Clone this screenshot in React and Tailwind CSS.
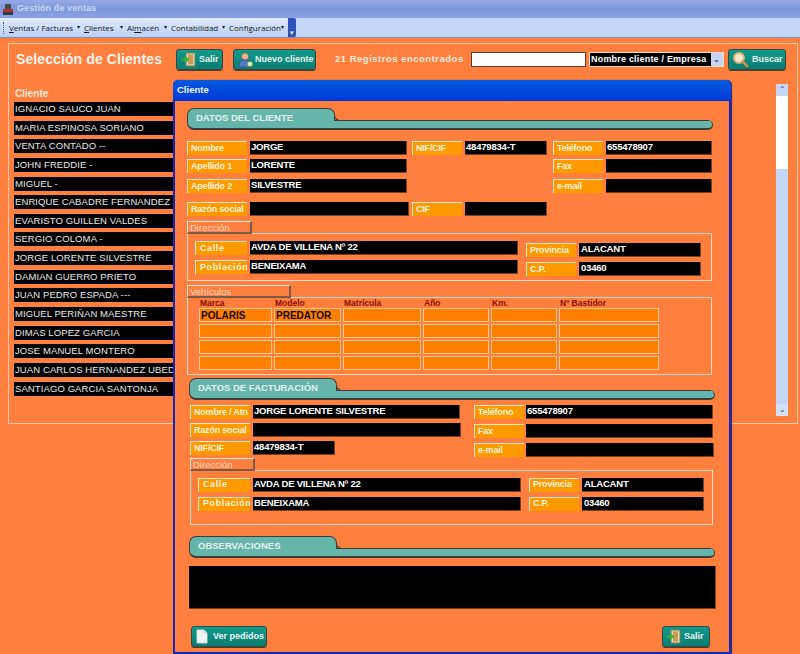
import React from 'react'

const clientes = [
  'IGNACIO SAUCO JUAN',
  'MARIA ESPINOSA SORIANO',
  'VENTA CONTADO --',
  'JOHN FREDDIE -',
  'MIGUEL  -',
  'ENRIQUE CABADRE FERNANDEZ',
  'EVARISTO GUILLEN VALDES',
  'SERGIO COLOMA -',
  'JORGE LORENTE SILVESTRE',
  'DAMIAN GUERRO PRIETO',
  'JUAN PEDRO ESPADA ---',
  'MIGUEL PERIÑAN MAESTRE',
  'DIMAS LOPEZ GARCIA',
  'JOSE MANUEL MONTERO',
  'JUAN CARLOS HERNANDEZ UBED',
  'SANTIAGO GARCIA SANTONJA',
]

const menus = [
  { w: 'w-[75px]', label: <><u>V</u>entas / Facturas</> },
  { w: 'w-[43px]', label: <><u>C</u>lientes</> },
  { w: 'w-[44px]', label: <>Al<u>m</u>acén</> },
  { w: 'w-[58px]', label: <>Contabilidad</> },
  { w: 'w-[57px]', label: <>Configuración</> },
]

const DoorIcon = () => (
  <svg width="15" height="15" viewBox="0 0 15 15" className="shrink-0">
    <rect x="5" y="1" width="9" height="13" fill="#e8d8a8" stroke="#70806a" />
    <rect x="7" y="2.5" width="5" height="10" fill="#c99a50" />
    <path d="M1 7.5h5M4 5l3 2.5L4 10" fill="none" stroke="#3fae3f" strokeWidth="2" />
  </svg>
)

const UserIcon = () => (
  <svg width="17" height="16" viewBox="0 0 17 16" className="shrink-0">
    <circle cx="8" cy="4.5" r="3.5" fill="#f0b890" stroke="#80604a" strokeWidth="0.7" />
    <path d="M2 15c0-5 2.500-7 6-7s6 2 6 7z" fill="#4f79c8" stroke="#2f4f90" strokeWidth="0.7" />
    <circle cx="13" cy="12" r="2.800" fill="#d8e8c0" stroke="#5a8a4a" strokeWidth="0.8" />
  </svg>
)

const SearchIcon = () => (
  <svg width="17" height="17" viewBox="0 0 17 17" className="shrink-0">
    <circle cx="7" cy="7" r="5" fill="#f4ead0" stroke="#e0b070" strokeWidth="2" />
    <path d="M10.500 10.500L15 15" stroke="#c89050" strokeWidth="2.500" strokeLinecap="round" />
  </svg>
)

const PageIcon = () => (
  <svg width="14" height="15" viewBox="0 0 14 15" className="shrink-0">
    <path d="M2 1h7l3 3v10H2z" fill="#eef4f2" stroke="#c8dcd8" />
    <path d="M9 1v3h3" fill="#ffffff" stroke="#b8ccc8" />
  </svg>
)

function TealButton({ className, children }) {
  return (
    <div className={`flex h-[21px] shrink-0 items-center rounded-[3px] border border-[#2f4a48] bg-gradient-to-b from-[#119a8c] to-[#0c7d72] text-[9px] font-bold whitespace-nowrap text-[#e8f4f0] shadow-[0_1px_0_#5a3a20] ${className}`}>
      {children}
    </div>
  )
}

function Label({ className, spaced, children }) {
  return (
    <div className={`flex h-[14px] shrink-0 items-center overflow-hidden border-t border-l border-[#ffe8c8] border-r-[#7a5a40] border-b-[#7a5a40] bg-[#ff9900] text-[9px] font-bold whitespace-nowrap text-[#fff4dc] ${spaced ? 'pl-[4px] tracking-[0.6px]' : 'pl-[3px] tracking-[-0.2px]'} ${className}`}>
      {children}
    </div>
  )
}

function Field({ className, children }) {
  return (
    <div className={`flex h-[14px] shrink-0 items-center overflow-hidden border-r border-b border-[#7a4020] bg-black pl-[1px] text-[9.500px] font-bold tracking-[-0.2px] whitespace-nowrap text-white ${className}`}>
      {children}
    </div>
  )
}

function SectionTitle({ className, children }) {
  return (
    <div className={`flex h-[22px] items-end ${className}`}>
      <div className="relative flex h-[22px] w-[148px] items-center rounded-t-[7px] rounded-bl-[7px] border border-b-2 border-[#3d3d38] bg-[#66b5ab] pl-[8px] text-[9.500px] font-bold whitespace-nowrap text-[#e4f2ee]">
        {children}
      </div>
      <div className="relative z-10 -ml-[7px] h-[10px] flex-1 rounded-r-full border-r border-b-2 border-[#3d3d38] bg-[#66b5ab]">
        <div className="absolute top-0 right-[3px] left-[6px] h-[1px] bg-[#3d3d38]" />
        <div className="absolute -top-[5px] left-[6px] h-[6px] w-[6px] rounded-bl-[6px] border-b border-l border-[#3d3d38] bg-[#ff7f3f]" />
      </div>
    </div>
  )
}

function GroupTab({ className, children }) {
  return (
    <div className={`relative z-10 h-[13px] border-t border-l border-[#ffe8d8] border-r-2 border-b-2 border-r-[#7a5a48] border-b-[#7a5a48] pl-[2px] text-[9.500px] leading-[11px] whitespace-nowrap text-[#ffd8c0] ${className}`}>
      {children}
    </div>
  )
}

function Direccion({ calle, poblacion, boxClass, leftClass, rightClass }) {
  return (
    <div>
      <GroupTab className="w-[65px]">Dirección</GroupTab>
      <div className={`-mt-px flex border-[1.500px] border-[#f0dccb] ${boxClass}`}>
        <div className={`ml-[7px] flex flex-col gap-[5px] ${leftClass}`}>
          <div className="flex gap-[3px]">
            <Label className="w-[52px]" spaced>Calle</Label>
            <Field className="w-[268px]">{calle}</Field>
          </div>
          <div className="flex gap-[3px]">
            <Label className="w-[52px]" spaced>Población</Label>
            <Field className="w-[268px]">{poblacion}</Field>
          </div>
        </div>
        <div className={`ml-[8px] flex flex-col gap-[5px] ${rightClass}`}>
          <div className="flex gap-[3px]">
            <Label className="w-[50px]">Provincia</Label>
            <Field className="w-[122px] pl-[2px]">ALACANT</Field>
          </div>
          <div className="flex gap-[3px]">
            <Label className="w-[50px]">C.P.</Label>
            <Field className="w-[122px] pl-[2px]">03460</Field>
          </div>
        </div>
      </div>
    </div>
  )
}

const vehiculoCols = ['w-[73px]', 'w-[67px]', 'w-[78px]', 'w-[66px]', 'w-[66px]', 'w-[100px]']
const vehiculoHead = ['Marca', 'Modelo', 'Matrícula', 'Año', 'Km.', 'Nº Bastidor']

function Vehiculos() {
  const rows = [['POLARIS', 'PREDATOR', '', '', '', ''], ['', '', '', '', '', ''], ['', '', '', '', '', ''], ['', '', '', '', '', '']]
  return (
    <div className="mt-[4px]">
      <GroupTab className="w-[104px]">Vehículos</GroupTab>
      <div className="-mt-px h-[78px] w-[525px] border-[1.500px] border-[#f0dccb] pl-[11px]">
        <div className="flex h-[10px] gap-[2px] text-[8.500px] leading-[10px] font-bold text-[#8a1008]">
          {vehiculoHead.map((h, i) => (
            <div key={h} className={`pl-[1px] ${vehiculoCols[i]}`}>{h}</div>
          ))}
        </div>
        <div className="flex flex-col gap-[2px]">
          {rows.map((row, r) => (
            <div key={r} className="flex gap-[2px]">
              {row.map((v, i) => (
                <div key={i} className={`flex h-[14px] items-center border border-[#ffc890] bg-[#ff8000] pl-[1px] text-[10px] font-bold text-[#140800] ${vehiculoCols[i]}`}>
                  {v}
                </div>
              ))}
            </div>
          ))}
        </div>
      </div>
    </div>
  )
}

function ClienteModal() {
  return (
    <div className="absolute top-[80px] left-[173px] h-[574px] w-[558px] rounded-t-[5px] bg-[#1028b8] shadow-[1px_0_1px_#30207a]">
      <div className="flex h-[21px] items-center rounded-t-[5px] bg-gradient-to-b from-[#0a5ae0] to-[#0038d8] pl-[4px] text-[9.500px] font-bold text-[#f0f4ff]">
        Cliente
      </div>
      <div className="mx-[2px] h-[551px] bg-[#ff7f3f] pt-[7px]">
        <div className="ml-[12px] w-[526px]">
          <SectionTitle>DATOS DEL CLIENTE</SectionTitle>
          <div className="mt-[11px] flex">
            <Label className="w-[60px]">Nombre</Label>
            <Field className="ml-[3px] w-[157px]">JORGE</Field>
            <Label className="ml-[5px] w-[50px]">NIF/CIF</Label>
            <Field className="ml-[3px] w-[82px]">48479834-T</Field>
            <Label className="ml-[6px] w-[50px]">Teléfono</Label>
            <Field className="ml-[3px] w-[106px]">655478907</Field>
          </div>
          <div className="mt-[4px] flex">
            <Label className="w-[60px]">Apellido 1</Label>
            <Field className="ml-[3px] w-[157px]">LORENTE</Field>
            <Label className="ml-[146px] w-[50px]">Fax</Label>
            <Field className="ml-[3px] w-[106px]" />
          </div>
          <div className="mt-[6px] flex">
            <Label className="w-[60px]">Apellido 2</Label>
            <Field className="ml-[3px] w-[157px]">SILVESTRE</Field>
            <Label className="ml-[146px] w-[50px]">e-mail</Label>
            <Field className="ml-[3px] w-[106px]" />
          </div>
          <div className="mt-[9px] flex">
            <Label className="w-[60px]">Razón social</Label>
            <Field className="ml-[3px] w-[159px]" />
            <Label className="ml-[3px] w-[50px]">CIF</Label>
            <Field className="ml-[3px] w-[82px]" />
          </div>
          <div className="mt-[5px]">
            <Direccion
              calle="AVDA DE VILLENA Nº 22"
              poblacion="BENEIXAMA"
              boxClass="h-[48px] w-[525px]"
              leftClass="mt-[7px]"
              rightClass="mt-[9px]"
            />
          </div>
          <Vehiculos />
        </div>
        <div className="ml-[14px] w-[526px]">
          <SectionTitle className="mt-[3px]">DATOS DE FACTURACIÓN</SectionTitle>
          <div className="mt-[5px] flex">
            <div className="ml-[1px] flex flex-col gap-[4px]">
              <div className="flex gap-[3px]">
                <Label className="w-[60px]">Nombre / Atn</Label>
                <Field className="w-[207px]">JORGE LORENTE SILVESTRE</Field>
              </div>
              <div className="flex gap-[3px]">
                <Label className="w-[60px]">Razón social</Label>
                <Field className="w-[208px]" />
              </div>
              <div className="flex gap-[3px]">
                <Label className="w-[60px]">NIF/CIF</Label>
                <Field className="w-[82px]">48479834-T</Field>
              </div>
            </div>
            <div className="ml-[13px] flex flex-col gap-[5px]">
              <div className="flex gap-[2px]">
                <Label className="w-[50px]">Teléfono</Label>
                <Field className="w-[187px]">655478907</Field>
              </div>
              <div className="flex gap-[2px]">
                <Label className="w-[50px]">Fax</Label>
                <Field className="w-[187px]" />
              </div>
              <div className="flex gap-[2px]">
                <Label className="w-[50px]">e-mail</Label>
                <Field className="w-[188px]" />
              </div>
            </div>
          </div>
          <div className="mt-[1px] ml-[1px]">
            <Direccion
              calle="AVDA DE VILLENA Nº 22"
              poblacion="BENEIXAMA"
              boxClass="h-[55px] w-[523px]"
              leftClass="mt-[6.500px]"
              rightClass="mt-[6.500px]"
            />
          </div>
          <SectionTitle className="mt-[11px]">OBSERVACIONES</SectionTitle>
          <div className="mt-[8px] h-[43px] w-[527px] border-r border-b border-[#7a4020] bg-black" />
          <div className="mt-[17px] flex justify-between pr-[5px] pl-[2px]">
            <TealButton className="w-[76px] gap-[4px] pl-[3px]">
              <PageIcon />
              Ver pedidos
            </TealButton>
            <TealButton className="w-[48px] gap-[3px] pl-[3px]">
              <DoorIcon />
              Salir
            </TealButton>
          </div>
        </div>
      </div>
    </div>
  )
}

export default function App() {
  return (
    <div className="relative h-[654px] w-[800px] overflow-hidden bg-[#ff7f3f] font-['Liberation_Sans',Arial,sans-serif]">
      <div className="flex h-[18px] items-center gap-[3px] bg-gradient-to-b from-[#97a9e4] via-[#7e95dc] to-[#8ca2e2] pl-[2px] text-[9px] font-bold tracking-[0.1px] text-[#c8d8f4]">
        <svg width="12" height="13" viewBox="0 0 12 13">
          <rect x="3" y="1" width="6" height="5" fill="#405048" />
          <rect x="1" y="6" width="10" height="3" fill="#b03030" />
          <rect x="1" y="9" width="10" height="3" fill="#304038" />
        </svg>
        Gestión de ventas
      </div>

      <div className="flex h-[20px] border-b border-[#8090a8] bg-[#c3d6f7]">
        <div className="flex w-[288px] items-center rounded-r-[2px] bg-gradient-to-b from-[#e0ebfc] to-[#bcd0f5] pl-[3px] font-['Open_Sans',sans-serif] text-[8px] text-[#101828]">
          <div className="mr-[4px] h-[12px] w-[2px] border-l border-dotted border-[#3a5a9a]" />
          {menus.map((m, i) => (
            <div key={i} className={`flex shrink-0 items-center justify-between pr-[4px] ${m.w}`}>
              <span className="whitespace-nowrap">{m.label}</span>
              <span className="text-[6px]">▾</span>
            </div>
          ))}
        </div>
        <div className="flex w-[8px] items-end justify-center rounded-r-[2px] bg-[#2f52b8] text-[7px] leading-[9px] text-white">▾</div>
      </div>

      <div className="mt-[5px] ml-[8px] h-[381px] w-[790px] border border-[#f2c8ae] pt-[5px] pl-[7px]">
        <div className="flex h-[21px] items-center">
          <div className="w-[160px] text-[14px] font-bold tracking-[0.1px] whitespace-nowrap text-[#fff4ec]">Selección de Clientes</div>
          <TealButton className="w-[47px] gap-[3px] pl-[4px]">
            <DoorIcon />
            Salir
          </TealButton>
          <TealButton className="ml-[10px] w-[83px] gap-[1px] pl-[3px]">
            <UserIcon />
            Nuevo cliente
          </TealButton>
          <div className="ml-[19px] w-[136px] text-[9.500px] font-bold tracking-[0.5px] whitespace-nowrap text-[#ffeada]">21 Registros encontrados</div>
          <div className="h-[15px] w-[115px] border border-[#5a3a30] bg-white" />
          <div className="ml-[3px] flex h-[15px] w-[135px] items-center border border-[#f0d8c8] bg-black pl-[1px] text-[9px] font-bold tracking-[0.2px] whitespace-nowrap text-white">
            <span className="flex-1">Nombre cliente / Empresa</span>
            <span className="flex h-[13px] w-[12px] items-center justify-center bg-[#c8d6f6] text-[8px] text-[#30407a]">⌄</span>
          </div>
          <TealButton className="ml-[4px] w-[58px] gap-[3px] pl-[3px]">
            <SearchIcon />
            Buscar
          </TealButton>
        </div>

        <div className="flex">
          <div className="-ml-[2px] w-[161px] pt-[18px]">
            <div className="h-[14px] pl-[1px] text-[10px] leading-[12px] font-bold text-[#ffeada]">Cliente</div>
            <div className="flex flex-col gap-[4.650px]">
              {clientes.map((c) => (
                <div key={c} className="h-[14px] overflow-hidden bg-black pl-[1px] text-[9.500px] leading-[14px] tracking-[0.1px] whitespace-nowrap text-[#e8e8e8]">
                  {c}
                </div>
              ))}
            </div>
          </div>
          <div className="mt-[14px] ml-[601px] flex h-[332px] w-[12px] flex-col">
            <div className="flex h-[12px] items-center justify-center bg-[#c8d6f6] text-[8px] text-[#30407a]">⌃</div>
            <div className="h-[73px] bg-white" />
            <div className="flex-1 bg-[#c3d6f7]" />
            <div className="flex h-[12px] items-center justify-center bg-[#d4e0f8] text-[8px] text-[#30407a]">⌄</div>
          </div>
        </div>
      </div>

      <ClienteModal />
    </div>
  )
}
